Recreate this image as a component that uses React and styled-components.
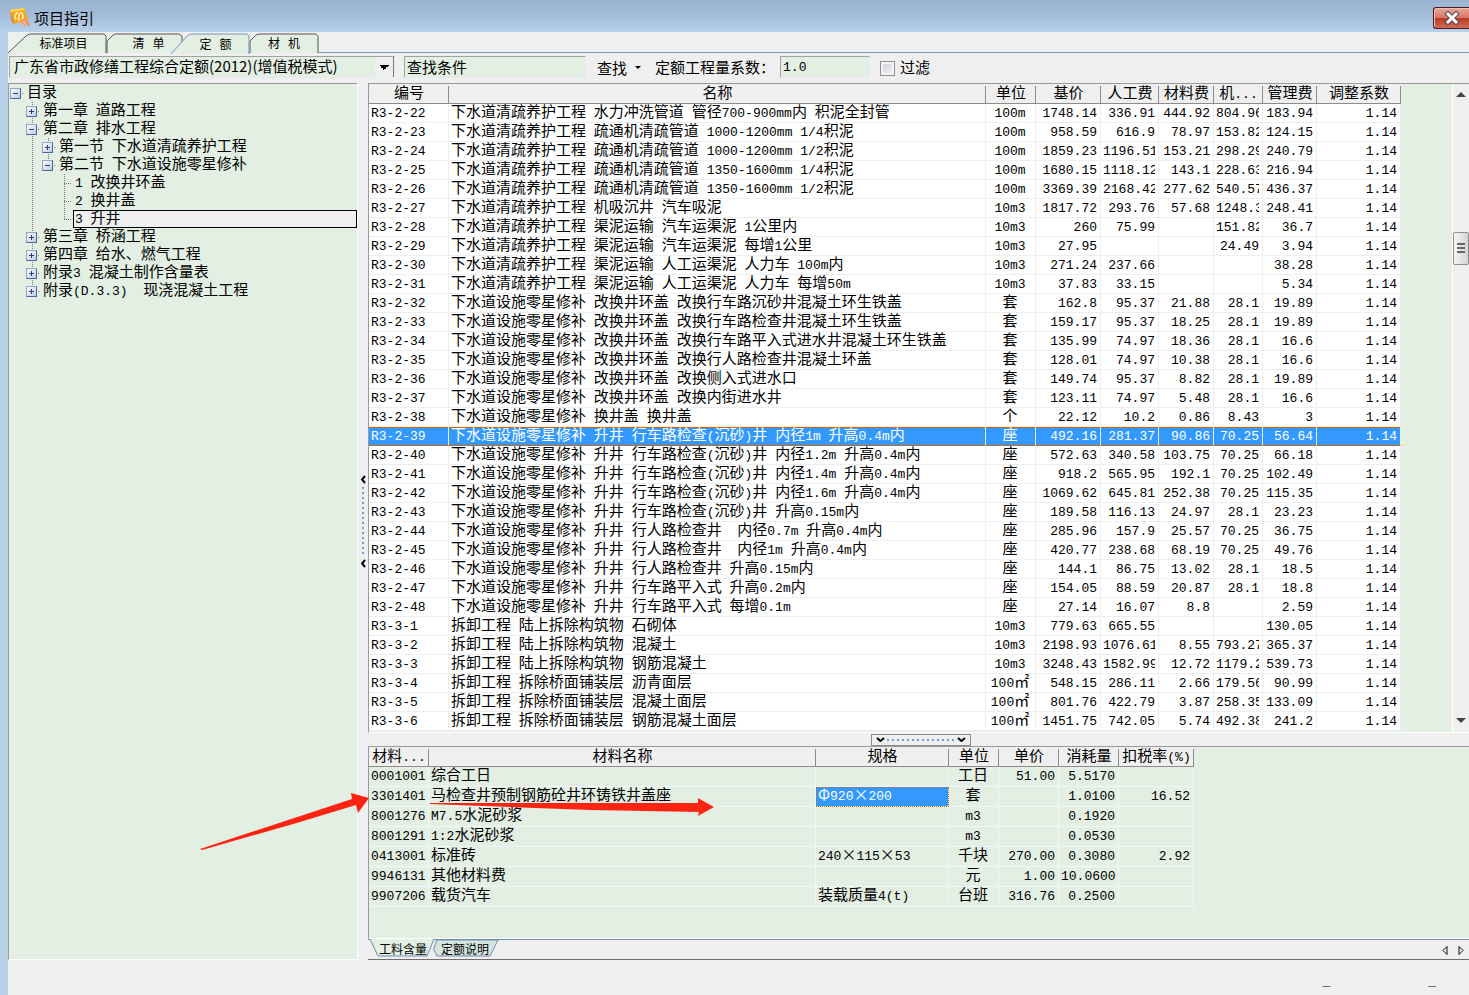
import React, { useState } from "react";
import styled, { createGlobalStyle, css } from "styled-components";

const quotaColumns = [
  { title: "编号", width: 80 },
  { title: "名称" },
  { title: "单位", width: 50, align: "center" },
  { title: "基价", width: 65, align: "right" },
  { title: "人工费", width: 58, align: "right" },
  { title: "材料费", width: 55, align: "right" },
  { title: "机...", width: 49, align: "right" },
  { title: "管理费", width: 54, align: "right" },
  { title: "调整系数", width: 84, align: "right" },
];

const quotaRows = [
  ["R3-2-22", "下水道清疏养护工程 水力冲洗管道 管径700-900mm内 积泥全封管", "100m", "1748.14", "336.91", "444.92", "804.96", "183.94"],
  ["R3-2-23", "下水道清疏养护工程 疏通机清疏管道 1000-1200mm 1/4积泥", "100m", "958.59", "616.9", "78.97", "153.82", "124.15"],
  ["R3-2-24", "下水道清疏养护工程 疏通机清疏管道 1000-1200mm 1/2积泥", "100m", "1859.23", "1196.51", "153.21", "298.29", "240.79"],
  ["R3-2-25", "下水道清疏养护工程 疏通机清疏管道 1350-1600mm 1/4积泥", "100m", "1680.15", "1118.12", "143.1", "228.63", "216.94"],
  ["R3-2-26", "下水道清疏养护工程 疏通机清疏管道 1350-1600mm 1/2积泥", "100m", "3369.39", "2168.42", "277.62", "540.57", "436.37"],
  ["R3-2-27", "下水道清疏养护工程 机吸沉井 汽车吸泥", "10m3", "1817.72", "293.76", "57.68", "1248.3", "248.41"],
  ["R3-2-28", "下水道清疏养护工程 渠泥运输 汽车运渠泥 1公里内", "10m3", "260", "75.99", "", "151.82", "36.7"],
  ["R3-2-29", "下水道清疏养护工程 渠泥运输 汽车运渠泥 每增1公里", "10m3", "27.95", "", "", "24.49", "3.94"],
  ["R3-2-30", "下水道清疏养护工程 渠泥运输 人工运渠泥 人力车 100m内", "10m3", "271.24", "237.66", "", "", "38.28"],
  ["R3-2-31", "下水道清疏养护工程 渠泥运输 人工运渠泥 人力车 每增50m", "10m3", "37.83", "33.15", "", "", "5.34"],
  ["R3-2-32", "下水道设施零星修补 改换井环盖 改换行车路沉砂井混凝土环生铁盖", "套", "162.8", "95.37", "21.88", "28.1", "19.89"],
  ["R3-2-33", "下水道设施零星修补 改换井环盖 改换行车路检查井混凝土环生铁盖", "套", "159.17", "95.37", "18.25", "28.1", "19.89"],
  ["R3-2-34", "下水道设施零星修补 改换井环盖 改换行车路平入式进水井混凝土环生铁盖", "套", "135.99", "74.97", "18.36", "28.1", "16.6"],
  ["R3-2-35", "下水道设施零星修补 改换井环盖 改换行人路检查井混凝土环盖", "套", "128.01", "74.97", "10.38", "28.1", "16.6"],
  ["R3-2-36", "下水道设施零星修补 改换井环盖 改换侧入式进水口", "套", "149.74", "95.37", "8.82", "28.1", "19.89"],
  ["R3-2-37", "下水道设施零星修补 改换井环盖 改换内街进水井", "套", "123.11", "74.97", "5.48", "28.1", "16.6"],
  ["R3-2-38", "下水道设施零星修补 换井盖 换井盖", "个", "22.12", "10.2", "0.86", "8.43", "3"],
  ["R3-2-39", "下水道设施零星修补 升井 行车路检查(沉砂)井 内径1m 升高0.4m内", "座", "492.16", "281.37", "90.86", "70.25", "56.64"],
  ["R3-2-40", "下水道设施零星修补 升井 行车路检查(沉砂)井 内径1.2m 升高0.4m内", "座", "572.63", "340.58", "103.75", "70.25", "66.18"],
  ["R3-2-41", "下水道设施零星修补 升井 行车路检查(沉砂)井 内径1.4m 升高0.4m内", "座", "918.2", "565.95", "192.1", "70.25", "102.49"],
  ["R3-2-42", "下水道设施零星修补 升井 行车路检查(沉砂)井 内径1.6m 升高0.4m内", "座", "1069.62", "645.81", "252.38", "70.25", "115.35"],
  ["R3-2-43", "下水道设施零星修补 升井 行车路检查(沉砂)井 升高0.15m内", "座", "189.58", "116.13", "24.97", "28.1", "23.23"],
  ["R3-2-44", "下水道设施零星修补 升井 行人路检查井  内径0.7m 升高0.4m内", "座", "285.96", "157.9", "25.57", "70.25", "36.75"],
  ["R3-2-45", "下水道设施零星修补 升井 行人路检查井  内径1m 升高0.4m内", "座", "420.77", "238.68", "68.19", "70.25", "49.76"],
  ["R3-2-46", "下水道设施零星修补 升井 行人路检查井 升高0.15m内", "座", "144.1", "86.75", "13.02", "28.1", "18.5"],
  ["R3-2-47", "下水道设施零星修补 升井 行车路平入式 升高0.2m内", "座", "154.05", "88.59", "20.87", "28.1", "18.8"],
  ["R3-2-48", "下水道设施零星修补 升井 行车路平入式 每增0.1m", "座", "27.14", "16.07", "8.8", "", "2.59"],
  ["R3-3-1", "拆卸工程 陆上拆除构筑物 石砌体", "10m3", "779.63", "665.55", "", "", "130.05"],
  ["R3-3-2", "拆卸工程 陆上拆除构筑物 混凝土", "10m3", "2198.93", "1076.61", "8.55", "793.27", "365.37"],
  ["R3-3-3", "拆卸工程 陆上拆除构筑物 钢筋混凝土", "10m3", "3248.43", "1582.99", "12.72", "1179.2", "539.73"],
  ["R3-3-4", "拆卸工程 拆除桥面铺装层 沥青面层", "100㎡", "548.15", "286.11", "2.66", "179.56", "90.99"],
  ["R3-3-5", "拆卸工程 拆除桥面铺装层 混凝土面层", "100㎡", "801.76", "422.79", "3.87", "258.35", "133.09"],
  ["R3-3-6", "拆卸工程 拆除桥面铺装层 钢筋混凝土面层", "100㎡", "1451.75", "742.05", "5.74", "492.38", "241.2"],
].map((row) => [...row, "1.14"]);

const materialColumns = [
  { title: "材料...", width: 60 },
  { title: "材料名称" },
  { title: "规格", width: 133 },
  { title: "单位", width: 50, align: "center" },
  { title: "单价", width: 60, align: "right" },
  { title: "消耗量", width: 60, align: "right" },
  { title: "扣税率(%)", width: 75, align: "right" },
];

const materialRows = [
  ["0001001", "综合工日", "", "工日", "51.00", "5.5170", ""],
  ["3301401", "马检查井预制钢筋砼井环铸铁井盖座", "Φ920×200", "套", "", "1.0100", "16.52"],
  ["8001276", "M7.5水泥砂浆", "", "m3", "", "0.1920", ""],
  ["8001291", "1:2水泥砂浆", "", "m3", "", "0.0530", ""],
  ["0413001", "标准砖", "240×115×53", "千块", "270.00", "0.3080", "2.92"],
  ["9946131", "其他材料费", "", "元", "1.00", "10.0600", ""],
  ["9907206", "载货汽车", "装载质量4(t)", "台班", "316.76", "0.2500", ""],
];

// guides: one entry per ancestor level, "line" where that level goes on below
const treeRows = [
  { text: "目录", guides: [], node: "open", last: true, root: true },
  { text: "第一章 道路工程", guides: [""], node: "closed" },
  { text: "第二章 排水工程", guides: [""], node: "open" },
  { text: "第一节 下水道清疏养护工程", guides: ["", "line"], node: "closed" },
  { text: "第二节 下水道设施零星修补", guides: ["", "line"], node: "open", last: true },
  { text: "1 改换井环盖", guides: ["", "line", ""], node: "leaf" },
  { text: "2 换井盖", guides: ["", "line", ""], node: "leaf" },
  { text: "3 升井", guides: ["", "line", ""], node: "leaf", last: true },
  { text: "第三章 桥涵工程", guides: [""], node: "closed" },
  { text: "第四章 给水、燃气工程", guides: [""], node: "closed" },
  { text: "附录3 混凝土制作含量表", guides: [""], node: "closed" },
  { text: "附录(D.3.3)  现浇混凝土工程", guides: [""], node: "closed", last: true },
];

// Latin runs use a fixed-width face next to the CJK text
function Mixed({ children }) {
  return children
    .split(/([\x20-\x7e]+)/)
    .filter(Boolean)
    .map((part, i) =>
      /^[\x20-\x7e]/.test(part) ? <Latin key={i}>{part}</Latin> : part
    );
}

function Grid({ label, columns, rows, rowHeight, gridColor, rowBg, selectedRow, selectedCell, onSelect }) {
  return (
    <Table aria-label={label}>
      <colgroup>
        {columns.map((c) => (
          <Col key={c.title} $width={c.width} />
        ))}
      </colgroup>
      <thead>
        <tr>
          {columns.map((c) => (
            <Th key={c.title}>
              <HeadText>
                <Mixed>{c.title}</Mixed>
              </HeadText>
            </Th>
          ))}
        </tr>
      </thead>
      <tbody>
        {rows.map((row, r) => (
          <Tr key={row[0]} $bg={rowBg} $selected={selectedRow === r} onClick={() => onSelect && onSelect(r)}>
            {row.map((value, c) => (
              <Td
                key={c}
                $align={columns[c].align}
                $line={gridColor}
                $selected={selectedCell && selectedCell[0] === r && selectedCell[1] === c}
              >
                <CellText $height={rowHeight - 1}>
                  <Mixed>{value}</Mixed>
                </CellText>
              </Td>
            ))}
          </Tr>
        ))}
      </tbody>
    </Table>
  );
}

export default function App() {
  const [quota, setQuota] = useState(17);
  const [node, setNode] = useState(7);
  return (
    <Window>
      <GlobalStyle />
      <TitleBar>
        <AppIcon viewBox="0 0 20 20" aria-hidden="true">
          <path d="M0 2 L14 0 L18 12 L4 16 Z" fill="#f9a51b" />
          <path d="M0 2 L4 16 L2 14 Z" fill="#f06a10" />
          <path d="M0 2 L14 0 L15 2 L1 4 Z" fill="#ffd84a" />
          <path d="M6 12 C4 7 6 4 8 5 M9 13 C8 8 9 5 11 5 M12 12 C14 8 12 5 11 4" fill="none" stroke="#fff3c4" strokeWidth="1.5" />
          <path d="M10 13 L16 10 L18 14 L20 18 L14 17 Z" fill="#f58a4b" />
          <path d="M12 13 L17 17 M16 12 L14 16" stroke="#fbd0b4" />
        </AppIcon>
        <Title>项目指引</Title>
        <CloseButton aria-label="关闭">
          <svg width="16" height="14" viewBox="0 0 16 14">
            <path d="M4 3 L12 11 M12 3 L4 11" stroke="#5b4a55" strokeWidth="5" strokeLinecap="square" />
            <path d="M4 3 L12 11 M12 3 L4 11" stroke="#fff" strokeWidth="3" strokeLinecap="square" />
          </svg>
        </CloseButton>
      </TitleBar>
      <Client>
        <Tabs role="tablist">
          <Tab role="tab" $width={99} $pad={12}>
            <TabShape viewBox="0 0 99 19">
              <path d="M0 19 L18 2 Q20 0 23 0 H96 L98 2 V19" fill="#e4efe4" stroke="#555" />
            </TabShape>
            <span>标准项目</span>
          </Tab>
          <Tab role="tab" $width={75} $pad={8}>
            <TabShape viewBox="0 0 75 19">
              <path d="M0 19 V7 L5 2 Q7 0 9 0 H72 L75 2 V19" fill="#e4efe4" stroke="#555" />
            </TabShape>
            <span>
              <Mixed>清 单</Mixed>
            </span>
          </Tab>
          <Tab role="tab" aria-selected="true" $width={79} $pad={10} $active>
            <TabShape viewBox="0 0 79 19">
              <path d="M0 20 L16 2 Q18 0 21 0 H76 L78 2 V20" fill="#e2efe2" stroke="#6f94bd" />
            </TabShape>
            <span>
              <Mixed>定 额</Mixed>
            </span>
          </Tab>
          <Tab role="tab" $width={68} $pad={0}>
            <TabShape viewBox="0 0 68 19">
              <path d="M0 19 V7 L5 2 Q7 0 9 0 H66 L68 2 V19" fill="#e4efe4" stroke="#555" />
            </TabShape>
            <span>
              <Mixed>材 机</Mixed>
            </span>
          </Tab>
        </Tabs>
        <Toolbar>
          <Library aria-label="定额库" defaultValue="gd2012">
            <option value="gd2012">广东省市政修缮工程综合定额(2012)(增值税模式)</option>
          </Library>
          <SearchInput aria-label="查找条件" defaultValue="查找条件" />
          <FindButton>
            查找
            <svg width="6" height="4" viewBox="0 0 6 4" aria-hidden="true">
              <path d="M0 0 H6 L3 3 Z" />
            </svg>
          </FindButton>
          <label htmlFor="factor">定额工程量系数：</label>
          <FactorInput id="factor" defaultValue="1.0" />
          <FilterLabel>
            <Check type="checkbox" />
            过滤
          </FilterLabel>
        </Toolbar>
        <Main>
          <Tree role="tree">
            {treeRows.map((row, i) => (
              <TreeRow key={row.text} role="treeitem" onClick={() => setNode(i)}>
                {row.guides.map((g, k) => (
                  <Guide key={k} $line={g} />
                ))}
                <Joint $last={row.last} $root={row.root}>
                  {row.node !== "leaf" && (
                    <Toggle aria-label={row.node === "open" ? "折叠" : "展开"}>
                      <svg width="7" height="7" viewBox="0 0 7 7">
                        <path d={row.node === "open" ? "M1 3.5 H6" : "M1 3.5 H6 M3.5 1 V6"} stroke="#28406e" />
                      </svg>
                    </Toggle>
                  )}
                </Joint>
                <NodeText $selected={node === i}>
                  <Mixed>{row.text}</Mixed>
                </NodeText>
              </TreeRow>
            ))}
          </Tree>
          <SideSplitter>
            <SplitArrow width="5" height="9" viewBox="0 0 5 9">
              <path d="M4 1 L1 4.5 L4 8" />
            </SplitArrow>
            <VerticalDots />
            <SplitArrow width="5" height="9" viewBox="0 0 5 9">
              <path d="M4 1 L1 4.5 L4 8" />
            </SplitArrow>
          </SideSplitter>
          <Right>
            <QuotaPanel>
              <QuotaArea>
                <Grid
                  label="定额"
                  columns={quotaColumns}
                  rows={quotaRows}
                  rowHeight={19}
                  gridColor="#eeeeee"
                  rowBg="#fff"
                  selectedRow={quota}
                  onSelect={setQuota}
                />
              </QuotaArea>
              <ScrollBar>
                <svg width="10" height="6" viewBox="0 0 10 6">
                  <path d="M0 5 L5 0 L10 5 Z" fill="#444" />
                </svg>
                <Thumb>
                  <i />
                  <i />
                  <i />
                </Thumb>
                <svg width="10" height="6" viewBox="0 0 10 6">
                  <path d="M0 0 L5 5 L10 0 Z" fill="#444" />
                </svg>
              </ScrollBar>
            </QuotaPanel>
            <LowerSplitter>
              <Handle>
                <SplitArrow width="9" height="5" viewBox="0 0 9 5">
                  <path d="M1 1 L4.5 4 L8 1" />
                </SplitArrow>
                <HorizontalDots />
                <SplitArrow width="9" height="5" viewBox="0 0 9 5">
                  <path d="M1 1 L4.5 4 L8 1" />
                </SplitArrow>
              </Handle>
            </LowerSplitter>
            <MaterialPanel>
              <Grid
                label="工料含量"
                columns={materialColumns}
                rows={materialRows}
                rowHeight={20}
                gridColor="#f3f5fc"
                rowBg="#e2efe2"
                selectedCell={[1, 2]}
              />
            </MaterialPanel>
            <BottomBar>
              <BottomTab $active>
                <BottomShape viewBox="0 0 66 18">
                  <path d="M2 -1 L10 16 H59 L66 -1" fill="#e2efe2" stroke="#6f8bb0" />
                </BottomShape>
                <span>工料含量</span>
              </BottomTab>
              <BottomTab>
                <BottomShape viewBox="0 0 66 18">
                  <path d="M0 8 L3 0 H64 L56 16 H3 L0 10 Z" fill="#d5e6e0" stroke="#6f8bb0" />
                </BottomShape>
                <span>定额说明</span>
              </BottomTab>
              <Pager>
                <button aria-label="上一页">
                  <svg width="6" height="9" viewBox="0 0 6 9">
                    <path d="M5 0.5 L1 4.5 L5 8.5 Z" fill="none" stroke="#111" />
                  </svg>
                </button>
                <button aria-label="下一页">
                  <svg width="6" height="9" viewBox="0 0 6 9">
                    <path d="M1 0.5 L5 4.5 L1 8.5 Z" fill="none" stroke="#111" />
                  </svg>
                </button>
              </Pager>
            </BottomBar>
          </Right>
        </Main>
        <StatusBar>
          <span>_</span>
          <span>_</span>
        </StatusBar>
      </Client>
      <Marks viewBox="0 0 520 70" aria-hidden="true">
        <path d="M0 64 L152 14 L151 8 L169 13 L158 28 L156 20 L100 37 L2 65 Z" />
        <path d="M230 18 L498 18 L498 13 L514 22 L498 31 L499 27 L390 25 L230 19 Z" />
      </Marks>
    </Window>
  );
}

const cjk = `"Noto Sans CJK SC", sans-serif`;
const green = "#e2efe2";
const grey = "#efefef";

const GlobalStyle = createGlobalStyle`
  * {
    box-sizing: border-box;
  }
  body {
    margin: 0;
    font: 15px/18px ${cjk};
    color: #000;
    background: ${grey};
  }
  button, input, select {
    font: inherit;
    color: inherit;
    border-radius: 0;
  }
  button {
    padding: 0;
    border: 0;
    background: none;
  }
`;

const Latin = styled.span`
  font: 13px/13px "Liberation Mono", monospace;
`;

const Window = styled.div`
  position: relative;
  display: flex;
  flex-direction: column;
  min-height: 100vh;
  background: #b9d0e9;
  overflow: hidden;
`;

const TitleBar = styled.header`
  display: flex;
  align-items: center;
  height: 32px;
  padding-left: 10px;
  background: linear-gradient(#99b3d1, #a3bcd8 50%, #b9d2ec);
`;

const AppIcon = styled.svg`
  width: 20px;
  height: 20px;
  margin-top: 4px;
`;

const Title = styled.h1`
  flex: 1;
  margin: 4px 0 0 4px;
  font-size: 15px;
  font-weight: 400;
`;

const CloseButton = styled.button`
  display: flex;
  align-items: center;
  justify-content: center;
  width: 36px;
  height: 22px;
  margin-top: 4px;
  border: 1px solid #4c1a24;
  border-right: 0;
  border-radius: 3px 0 0 3px;
  background: linear-gradient(#e9a699, #d9786a 48%, #b93a22 52%, #cf6d55);
  box-shadow: inset 1px 1px 0 #f0bdb4;
`;

const Client = styled.div`
  display: flex;
  flex: 1;
  flex-direction: column;
  margin-left: 8px;
  background: ${grey};
`;

const Tabs = styled.div`
  display: flex;
  height: 21px;
  padding-top: 2px;
  border-bottom: 1px solid #7d9dbd;
`;

const Tab = styled.button`
  position: relative;
  width: ${(p) => p.$width}px;
  height: ${(p) => (p.$active ? 19 : 18)}px;
  margin-left: ${(p) => (p.$active ? -11 : 0)}px;
  padding-left: ${(p) => p.$pad}px;
  font-size: 12px;
  white-space: pre;
  z-index: ${(p) => (p.$active ? 1 : 0)};
  > span {
    position: relative;
  }
`;

const TabShape = styled.svg`
  position: absolute;
  inset: 0;
  width: 100%;
  height: 19px;
  overflow: visible;
`;

const Toolbar = styled.div`
  display: flex;
  align-items: center;
  height: 30px;
  padding: 0 0 2px 1px;
`;

const sunken = css`
  height: 22px;
  border: 1px solid;
  border-color: #a2a2a2 #e6ebf2 #e6ebf2 #a2a2a2;
  background-color: ${green};
  outline: 0;
`;

const Library = styled.select`
  ${sunken}
  width: 386px;
  padding: 0 20px 2px 4px;
  appearance: none;
  background-image: linear-gradient(45deg, transparent 50%, #000 50%), linear-gradient(-45deg, transparent 50%, #000 50%),
    linear-gradient(#777, #777), linear-gradient(${grey}, ${grey});
  background-position: right 10px top 8px, right 5px top 8px, right 0 top 0, right 0 top 0;
  background-size: 5px 5px, 5px 5px, 1px 100%, 19px 100%;
  background-repeat: no-repeat;
`;

const SearchInput = styled.input`
  ${sunken}
  width: 182px;
  margin-left: 9px;
  padding: 0 2px 2px;
`;

const FindButton = styled.button`
  display: flex;
  align-items: center;
  gap: 8px;
  margin: 2px 14px 0 11px;
`;

const FactorInput = styled.input`
  ${sunken}
  width: 90px;
  margin-left: 5px;
  padding: 0 2px;
  font: 13px "Liberation Mono", monospace;
`;

const FilterLabel = styled.label`
  display: flex;
  align-items: center;
  gap: 5px;
  margin-left: 10px;
`;

const Check = styled.input`
  appearance: none;
  width: 15px;
  height: 15px;
  margin: 2px 0 0;
  border: 1px solid #8e8f8f;
  background: linear-gradient(135deg, #c9ced6, #f6f6f6);
  box-shadow: inset 0 0 0 2px #f4f4f4;
`;

const Main = styled.main`
  display: flex;
  flex: 1;
`;

const Tree = styled.div`
  width: 350px;
  border: 1px solid;
  border-color: #9a9a9a #fff #fff #9a9a9a;
  background: ${green};
`;

const TreeRow = styled.div`
  display: flex;
  height: 18px;
  white-space: pre;
`;

const dotsDown = "repeating-linear-gradient(to bottom, #7a7a7a 0 1px, transparent 1px 2px)";
const dotsAcross = "repeating-linear-gradient(to right, #7a7a7a 0 1px, transparent 1px 2px)";

const Guide = styled.span`
  width: 16px;
  background: ${(p) => (p.$line ? `${dotsDown} 7px 0 / 1px 100% no-repeat` : "none")};
`;

const Joint = styled.span`
  display: flex;
  align-items: center;
  width: 16px;
  padding-left: 1px;
  background: ${dotsAcross} 7px 9px / 7px 1px no-repeat,
    ${dotsDown} 7px 0 / 1px ${(p) => (p.$root ? "0" : p.$last ? "10px" : "100%")} no-repeat;
`;

const Toggle = styled.button`
  display: flex;
  align-items: center;
  justify-content: center;
  width: 11px;
  height: 11px;
  border: 1px solid;
  border-color: #8fa5cb #4d6595 #4d6595 #8fa5cb;
  background: linear-gradient(135deg, #fff, #b9cbe8);
`;

const NodeText = styled.span`
  flex: 1;
  padding-left: 2px;
  line-height: 14px;
  ${(p) =>
    p.$selected &&
    css`
      padding-left: 1px;
      border: 1px solid #000;
      line-height: 12px;
      background: ${grey};
    `}
`;

const SideSplitter = styled.div`
  display: flex;
  flex-direction: column;
  align-items: center;
  justify-content: center;
  width: 10px;
  gap: 3px;
`;

const SplitArrow = styled.svg`
  path {
    fill: none;
    stroke: #000;
    stroke-width: 2;
  }
`;

const VerticalDots = styled.div`
  width: 2px;
  height: 69px;
  background: repeating-linear-gradient(to bottom, #6d9cd8 0 2px, transparent 2px 5px);
`;

const Right = styled.div`
  display: flex;
  flex: 1;
  flex-direction: column;
  min-width: 0;
`;

const QuotaPanel = styled.section`
  display: flex;
  height: 650px;
  border: 1px solid;
  border-color: #9a9a9a transparent #fff #9a9a9a;
  border-right: 0;
  background: ${green};
`;

const QuotaArea = styled.div`
  flex: 1;
  padding-right: 51px;
  border-right: 1px solid #fff;
  min-width: 0;
`;

const ScrollBar = styled.div`
  display: flex;
  flex-direction: column;
  align-items: center;
  justify-content: space-between;
  width: 16px;
  padding: 8px 0;
  background: ${grey};
`;

const Thumb = styled.div`
  display: flex;
  flex-direction: column;
  gap: 2px;
  align-items: center;
  justify-content: center;
  width: 16px;
  height: 33px;
  margin-bottom: 320px;
  border: 1px solid #8e8e8e;
  border-radius: 2px;
  background: linear-gradient(to right, #f5f5f5, #d4d4d8);
  i {
    width: 8px;
    height: 2px;
    background: #666;
  }
`;

const Table = styled.table`
  width: 100%;
  table-layout: fixed;
  border-spacing: 0;
`;

const Col = styled.col`
  width: ${(p) => (p.$width ? `${p.$width}px` : "auto")};
`;

const Th = styled.th`
  height: 20px;
  padding: 0;
  border-bottom: 1px solid #8c8c8c;
  background: linear-gradient(#8c8c8c, #8c8c8c) right bottom / 1px 17px no-repeat ${grey};
  font-weight: 400;
`;

const HeadText = styled.div`
  height: 19px;
  line-height: 16px;
  white-space: nowrap;
`;

const Td = styled.td`
  padding: 0 3px 0 2px;
  border-right: 1px solid ${(p) => p.$line};
  border-bottom: 1px solid ${(p) => p.$line};
  text-align: ${(p) => p.$align || "left"};
  ${(p) =>
    p.$selected &&
    css`
      color: #fff;
      background: #3399ff;
      outline: 1px dotted #c96a12;
      outline-offset: -1px;
    `}
`;

const Tr = styled.tr`
  background: ${(p) => p.$bg};
  ${(p) =>
    p.$selected &&
    css`
      color: #fff;
      background: #3399ff;
      ${Td} {
        border-bottom-color: #c8690f;
        box-shadow: inset 0 1px 0 #c8690f;
      }
    `}
`;

const CellText = styled.div`
  height: ${(p) => p.$height}px;
  line-height: 14px;
  white-space: pre;
  overflow-x: clip;
  overflow-y: visible;
`;

const LowerSplitter = styled.div`
  display: flex;
  justify-content: center;
  align-items: center;
  height: 13px;
  padding-left: 4px;
`;

const Handle = styled.div`
  display: flex;
  align-items: center;
  justify-content: space-between;
  width: 100px;
  height: 12px;
  padding: 0 4px;
  border: 1px solid #8c8c8c;
`;

const HorizontalDots = styled.div`
  width: 68px;
  height: 2px;
  background: repeating-linear-gradient(to right, #6d9cd8 0 2px, transparent 2px 5px);
`;

const MaterialPanel = styled.section`
  flex: 1;
  padding-right: 275px;
  border: 1px solid;
  border-color: #9a9a9a transparent #fff #9a9a9a;
  border-right: 0;
  background: ${green};
`;

const BottomBar = styled.div`
  display: flex;
  height: 21px;
  border-top: 1px solid #6f8bb0;
  border-bottom: 1px solid #6e6e6e;
`;

const BottomTab = styled.button`
  position: relative;
  width: 66px;
  height: 17px;
  padding: ${(p) => (p.$active ? "0 0 0 4px" : "0 4px 2px 0")};
  font-size: 12px;
  line-height: 17px;
  z-index: ${(p) => (p.$active ? 1 : 0)};
  span {
    position: relative;
  }
`;

const BottomShape = styled.svg`
  position: absolute;
  inset: 0;
  width: 100%;
  height: 18px;
  overflow: visible;
`;

const Pager = styled.div`
  display: flex;
  gap: 10px;
  margin-left: auto;
  padding: 0 5px 4px 0;
`;

const StatusBar = styled.footer`
  display: flex;
  justify-content: flex-end;
  align-items: flex-end;
  gap: 98px;
  height: 35px;
  padding: 0 33px 7px 0;
  font: 13px/13px "Liberation Mono", monospace;
`;

// hand-drawn arrows laid over the window
const Marks = styled.svg`
  position: absolute;
  left: 200px;
  top: 785px;
  width: 520px;
  height: 70px;
  fill: #ff2412;
  pointer-events: none;
`;
